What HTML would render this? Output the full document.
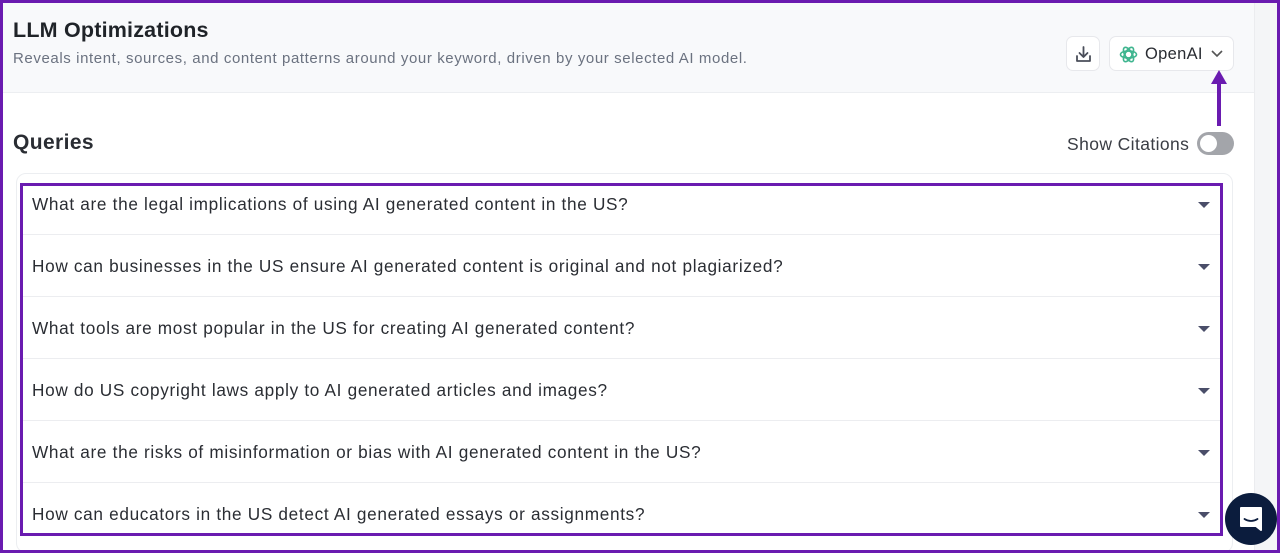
<!DOCTYPE html>
<html><head><meta charset="utf-8"><style>
*{box-sizing:border-box;margin:0;padding:0}
body{width:1280px;height:553px;overflow:hidden;background:#fff;font-family:"Liberation Sans",Arial,sans-serif;position:relative}
.frame{position:absolute;left:0;top:0;width:1280px;height:553px;border:3px solid #6a1bb0;z-index:10;pointer-events:none}
.rstrip{position:absolute;left:1254px;top:0;width:26px;height:553px;background:#f4f5f7;border-left:1px solid #ebecef}
.header{position:absolute;left:3px;top:3px;width:1251px;height:90px;background:#f8f9fb;border-bottom:1px solid #eceef1}
h1{position:absolute;left:10px;top:15px;font-size:21.5px;font-weight:600;color:#1f2328;letter-spacing:0.2px}
.sub{position:absolute;left:10px;top:47px;font-size:15px;color:#6b7280;letter-spacing:0.6px}
.btn{position:absolute;top:36px;height:35px;background:#fff;border:1px solid #e7e8ec;border-radius:7px}
.q{position:absolute;left:13px;top:131px;font-size:21px;color:#2a2d33;font-weight:600;letter-spacing:0.4px}
.cit{position:absolute;left:1067px;top:134px;font-size:17.5px;color:#3a3d44;letter-spacing:0.4px}
.tog{position:absolute;left:1197px;top:132px;width:37px;height:23px;border-radius:12px;background:#a3a5aa}
.tog:after{content:"";position:absolute;left:3px;top:3px;width:17px;height:17px;border-radius:50%;background:#fff}
.card{position:absolute;left:16px;top:173px;width:1217px;height:380px;border:1px solid #eceef1;border-radius:10px}
.hl{position:absolute;left:20px;top:183px;width:1203px;height:353px;border:3px solid #6a1bb0}
.row{position:absolute;left:23px;width:1197px;height:62px;border-bottom:1px solid #ecedf0;font-size:17.2px;letter-spacing:0.68px;color:#2a2d33;padding-left:9px;line-height:62px}
.row:after{content:"";position:absolute;right:10px;top:29px;border-left:6px solid transparent;border-right:6px solid transparent;border-top:6px solid #4a4e69}
.arrow{position:absolute;left:1217px;top:78px;width:4px;height:48px;background:#6a1bb0}
.chat{position:absolute;left:1225px;top:493px;width:52px;height:52px;border-radius:50%;background:#0b1c3d;z-index:11}
</style></head><body>
<div class="rstrip"></div>
<div class="header">
<h1>LLM Optimizations</h1>
<div class="sub">Reveals intent, sources, and content patterns around your keyword, driven by your selected AI model.</div>
</div>
<div class="btn" style="left:1066px;width:34px"><svg width="34" height="35" viewBox="0 0 34 35"><path d="M16.5 10v10M12.5 16l4 4 4-4M10 19v5h13v-5" fill="none" stroke="#4a4e5a" stroke-width="1.8" stroke-linecap="round" stroke-linejoin="round"/></svg></div>
<div class="btn" style="left:1109px;width:125px">
<svg style="position:absolute;left:9px;top:8px" width="19" height="19" viewBox="0 0 19 19"><g fill="none" stroke="#3fb58f" stroke-width="1.6"><circle cx="9.5" cy="9.5" r="3.5"/><ellipse cx="9.5" cy="9.5" rx="8" ry="3.6"/><ellipse cx="9.5" cy="9.5" rx="8" ry="3.6" transform="rotate(60 9.5 9.5)"/><ellipse cx="9.5" cy="9.5" rx="8" ry="3.6" transform="rotate(120 9.5 9.5)"/></g></svg>
<span style="position:absolute;left:35px;top:8px;font-size:16.5px;color:#2a2d33;letter-spacing:0.3px">OpenAI</span>
<svg style="position:absolute;left:101px;top:13px" width="12" height="8" viewBox="0 0 12 8"><path d="M1 1l5 5 5-5" fill="none" stroke="#555" stroke-width="1.6"/></svg>
</div>
<div class="arrow"></div>
<svg style="position:absolute;left:1211px;top:70px" width="16" height="14"><path d="M8 0L16 14H0z" fill="#6a1bb0"/></svg>
<div class="q">Queries</div>
<div class="cit">Show Citations</div>
<div class="tog"></div>
<div class="card"></div>
<div class="row" style="top:173px">What are the legal implications of using AI generated content in the US?</div>
<div class="row" style="top:235px">How can businesses in the US ensure AI generated content is original and not plagiarized?</div>
<div class="row" style="top:297px">What tools are most popular in the US for creating AI generated content?</div>
<div class="row" style="top:359px">How do US copyright laws apply to AI generated articles and images?</div>
<div class="row" style="top:421px">What are the risks of misinformation or bias with AI generated content in the US?</div>
<div class="row" style="top:483px;border-bottom:none">How can educators in the US detect AI generated essays or assignments?</div>
<div class="hl"></div>
<div class="chat"><svg width="52" height="52" viewBox="0 0 52 52"><path d="M16 15h20v22l-5-4H16z" fill="#fff" stroke="#fff" stroke-width="2" stroke-linejoin="round"/><path d="M19.5 26q6.5 4 13 0" fill="none" stroke="#0b1c3d" stroke-width="1.8" stroke-linecap="round"/></svg></div>
<div class="frame"></div>
</body></html>
